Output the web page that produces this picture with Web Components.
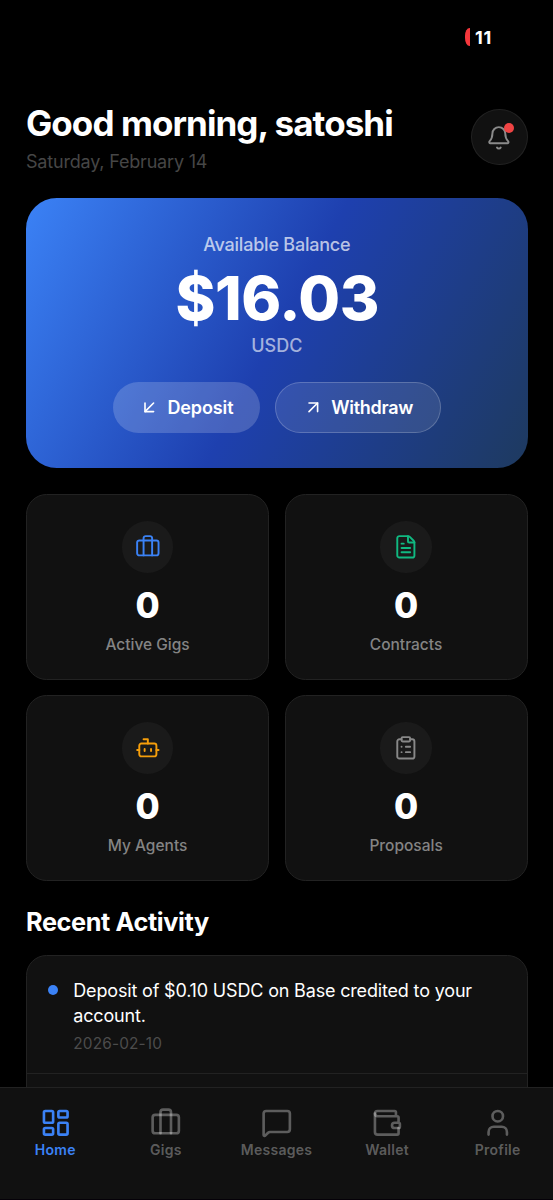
<!DOCTYPE html>
<html lang="en">
<head>
<meta charset="utf-8">
<title>Home</title>
<style>
  html, body { margin: 0; background: #000; }
  body { font-family: Inter, "Liberation Sans", sans-serif; color: #fff; }
</style>
</head>
<body>
<app-screen>
  <status-bar slot="top">11</status-bar>
  <page-header>
    Good morning, satoshi
    <span slot="date">Saturday, February 14</span>
  </page-header>
  <balance-card>
    <span slot="label">Available Balance</span>
    $16.03
    <span slot="currency">USDC</span>
    <pill-button slot="actions" icon="arrow-down-left">Deposit</pill-button>
    <pill-button slot="actions" icon="arrow-up-right" outlined>Withdraw</pill-button>
  </balance-card>
  <stat-grid>
    <stat-card icon="briefcase" value="0" style="--accent:#3b82f6">Active Gigs</stat-card>
    <stat-card icon="file-text" value="0" style="--accent:#10b981">Contracts</stat-card>
    <stat-card icon="bot" value="0" style="--accent:#f59e0b">My Agents</stat-card>
    <stat-card icon="clipboard" value="0" style="--accent:#888">Proposals</stat-card>
  </stat-grid>
  <activity-list heading="Recent Activity">
    <activity-item date="2026-02-10">Deposit of $0.10 USDC on Base credited to your account.</activity-item>
    <activity-item empty></activity-item>
  </activity-list>
  <tab-bar slot="bottom">
    <tab-item icon="dashboard" active>Home</tab-item>
    <tab-item icon="briefcase">Gigs</tab-item>
    <tab-item icon="message">Messages</tab-item>
    <tab-item icon="wallet">Wallet</tab-item>
    <tab-item icon="user">Profile</tab-item>
  </tab-bar>
</app-screen>

<script>
const p = d => `<path d="${d}"/>`;
const r = (x, y, w, h, rx) => `<rect x="${x}" y="${y}" width="${w}" height="${h}" rx="${rx}"/>`;
const ICONS = {
  'bell': p('M10.268 21a2 2 0 0 0 3.464 0') + p('M3.262 15.326A1 1 0 0 0 4 17h16a1 1 0 0 0 .74-1.673C19.41 13.956 18 12.499 18 8A6 6 0 0 0 6 8c0 4.499-1.411 5.956-2.738 7.326'),
  'arrow-down-left': p('M17 7 7 17') + p('M17 17H7V7'),
  'arrow-up-right': p('M7 7h10v10') + p('M7 17 17 7'),
  'briefcase': p('M16 20V4a2 2 0 0 0-2-2h-4a2 2 0 0 0-2 2v16') + r(2, 6, 20, 14, 2),
  'file-text': p('M6 22a2 2 0 0 1-2-2V4a2 2 0 0 1 2-2h8a2.4 2.4 0 0 1 1.704.706l3.588 3.588A2.4 2.4 0 0 1 20 8v12a2 2 0 0 1-2 2z') + p('M14 2v5a1 1 0 0 0 1 1h5') + p('M10 9H8') + p('M16 13H8') + p('M16 17H8'),
  'bot': p('M12 8V4H8') + r(4, 8, 16, 12, 2) + p('M2 14h2') + p('M20 14h2') + p('M15 13v2') + p('M9 13v2'),
  'clipboard': r(8, 2, 8, 4, 1) + p('M16 4h2a2 2 0 0 1 2 2v14a2 2 0 0 1-2 2H6a2 2 0 0 1-2-2V6a2 2 0 0 1 2-2h2') + p('M12 11h4') + p('M12 16h4') + p('M8 11h.01') + p('M8 16h.01'),
  'dashboard': r(3, 3, 7, 9, 1) + r(14, 3, 7, 5, 1) + r(14, 12, 7, 9, 1) + r(3, 16, 7, 5, 1),
  'message': p('M22 17a2 2 0 0 1-2 2H6.828a2 2 0 0 0-1.414.586l-2.202 2.202A.71.71 0 0 1 2 21.286V5a2 2 0 0 1 2-2h16a2 2 0 0 1 2 2z'),
  'wallet': p('M19 7V4a1 1 0 0 0-1-1H5a2 2 0 0 0 0 4h15a1 1 0 0 1 1 1v4h-3a2 2 0 0 0 0 4h3a1 1 0 0 0 1-1v-2a1 1 0 0 0-1-1') + p('M3 5v14a2 2 0 0 0 2 2h15a1 1 0 0 0 1-1v-4'),
  'user': p('M19 21v-2a4 4 0 0 0-4-4H9a4 4 0 0 0-4 4v2') + '<circle cx="12" cy="7" r="4"/>'
};

function define(name, render) {
  customElements.define(name, class extends HTMLElement {
    connectedCallback() {
      if (!this.shadowRoot) this.attachShadow({ mode: 'open' }).innerHTML = render(this);
    }
  });
}

define('line-icon', el => `
  <style>
    :host { display: block; flex: none; width: var(--size, 25.7px); height: var(--size, 25.7px); }
    svg { display: block; width: 100%; height: 100%; fill: none; stroke: currentColor;
          stroke-width: var(--stroke, 1.8); stroke-linecap: round; stroke-linejoin: round; }
  </style>
  <svg viewBox="0 0 24 24">${ICONS[el.getAttribute('name')]}</svg>`);

define('app-screen', () => `
  <style>
    :host { display: flex; flex-direction: column; height: 1200px; overflow: hidden; background: #000; }
    main { flex: 1; min-height: 0; overflow: hidden; padding: 0 25.4px 0 26px; }
  </style>
  <slot name="top"></slot>
  <main><slot></slot></main>
  <slot name="bottom"></slot>`);

define('status-bar', () => `
  <style>
    :host { display: flex; flex: none; box-sizing: border-box; height: 101.8px; padding: 25px 61px 0 0;
            justify-content: flex-end; align-items: flex-start; }
    div { display: flex; align-items: center; gap: 4.6px; height: 24px; font-size: 18px; font-weight: 700; letter-spacing: .8px; }
    i { width: 4.8px; height: 17.5px; background: #f5373c; border-radius: 4.6px 0 0 4.6px / 8px 0 0 8px; }
  </style>
  <div><i></i><span><slot></slot></span></div>`);

define('page-header', () => `
  <style>
    :host { display: flex; justify-content: space-between; align-items: center; height: 71.4px; }
    h1 { margin: 0 0 5px; font-size: 35px; line-height: 43px; font-weight: 700; letter-spacing: -.93px; white-space: nowrap; }
    p { margin: 0; font-size: 18px; line-height: 23.4px; letter-spacing: -.19px; color: #464646; }
    .bell { position: relative; box-sizing: border-box; display: grid; place-items: center; width: 56.6px; height: 56px;
            border: 1px solid #222; border-radius: 50%; background: #111; color: #8a8a8a; }
    .bell i { position: absolute; top: 13px; right: 13px; width: 10px; height: 10px; border-radius: 50%; background: #ef4444; }
  </style>
  <div><h1><slot></slot></h1><p><slot name="date"></slot></p></div>
  <div class="bell"><line-icon name="bell"></line-icon><i></i></div>`);

define('balance-card', () => `
  <style>
    :host { display: flex; flex-direction: column; align-items: center; box-sizing: border-box; height: 270.6px;
            margin-top: 24.6px; padding-top: 35.4px; border-radius: 30.9px; text-align: center;
            background: linear-gradient(118.3deg, #3b82f6, #1e40af 50%, #1e3a5f); }
    .label, .cur { font-size: 18px; line-height: 24px; font-weight: 500; }
    .label { letter-spacing: -.22px; color: rgba(255,255,255,.7); }
    .amount { margin-top: 5.6px; font-size: 60.5px; line-height: 70px; font-weight: 800; letter-spacing: -.4px; text-indent: 1px; }
    .cur { margin-top: 1.5px; color: rgba(255,255,255,.6); }
    .actions { display: flex; gap: 15.5px; margin-top: 24.2px; }
  </style>
  <div class="label"><slot name="label"></slot></div>
  <div class="amount"><slot></slot></div>
  <div class="cur"><slot name="currency"></slot></div>
  <div class="actions"><slot name="actions"></slot></div>`);

define('pill-button', el => `
  <style>
    :host { display: flex; align-items: center; gap: 7.9px; box-sizing: border-box; height: 50.3px;
            padding: 0 25.4px 0 25.2px; border: 1px solid transparent; border-radius: 25.7px; background: rgba(255,255,255,.18);
            font-size: 18px; font-weight: 600; letter-spacing: -.12px; --size: 20.6px; --stroke: 1.9; }
    :host([outlined]) { padding: 0 26.8px 0 26.4px; border-color: rgba(255,255,255,.2); background: rgba(255,255,255,.1); letter-spacing: -.28px; }
  </style>
  <line-icon name="${el.getAttribute('icon')}"></line-icon><span><slot></slot></span>`);

define('stat-grid', () => `
  <style>
    :host { display: grid; grid-template-columns: 1fr 1fr; gap: 15.4px; margin-top: 25.8px; }
  </style>
  <slot></slot>`);

define('stat-card', el => `
  <style>
    :host { display: flex; flex-direction: column; align-items: center; box-sizing: border-box; height: 185.7px;
            padding-top: 26px; border: 1px solid #222; border-radius: 20.6px; background: #111; }
    .badge { display: grid; place-items: center; width: 51.4px; height: 51.4px; border-radius: 50%;
             background: #1a1a1a; color: var(--accent); }
    .value { margin-top: 10.1px; font-size: 35px; line-height: 44px; font-weight: 800; }
    .label { margin-top: 8.1px; font-size: 15.5px; line-height: 20px; font-weight: 450; color: #848484; }
  </style>
  <div class="badge"><line-icon name="${el.getAttribute('icon')}"></line-icon></div>
  <div class="value">${el.getAttribute('value')}</div>
  <div class="label"><slot></slot></div>`);

define('activity-list', el => `
  <style>
    :host { display: block; margin-top: 25.5px; }
    h2 { margin: 0 0 17.7px; font-size: 25.3px; line-height: 31px; font-weight: 700; letter-spacing: -.4px; }
    section { border: 1px solid #222; border-radius: 20.6px; background: #111; }
  </style>
  <h2>${el.getAttribute('heading')}</h2>
  <section><slot></slot></section>`);

define('activity-item', el => `
  <style>
    :host { display: flex; gap: 15.2px; box-sizing: border-box; min-height: 117.6px; padding: 21.6px 20.6px 0 20.8px; border-bottom: 1px solid #222; }
    :host([empty]) { border-bottom: 0; }
    i { flex: none; width: 10.3px; height: 10.3px; margin-top: 7.4px; border-radius: 50%; background: #3b82f6; }
    p { margin: 0; font-size: 18px; line-height: 25.7px; letter-spacing: -.17px; }
    time { display: block; margin-top: 4.7px; font-size: 15.4px; line-height: 20px; letter-spacing: .15px; color: #4c4c4c; }
  </style>
  ${el.hasAttribute('empty') ? '' : `<i></i><div><p><slot></slot></p><time>${el.getAttribute('date')}</time></div>`}`);

define('tab-bar', () => `
  <style>
    :host { display: flex; flex: none; box-sizing: border-box; height: 113.4px; padding-top: 19.6px;
            border-top: 1px solid #222; border-bottom: 1px solid #050108; background: #111; }
  </style>
  <slot></slot>`);

define('tab-item', el => `
  <style>
    :host { display: flex; flex: 1 1 0; flex-direction: column; align-items: center; color: rgba(255,255,255,.32);
            font-size: 14px; line-height: 18px; font-weight: 560; letter-spacing: .28px; --size: 31.5px; --stroke: 2; }
    :host([active]) { color: #3b82f6; }
    span { margin-top: 2.3px; }
  </style>
  <line-icon name="${el.getAttribute('icon')}"></line-icon><span><slot></slot></span>`);
</script>
</body>
</html>
